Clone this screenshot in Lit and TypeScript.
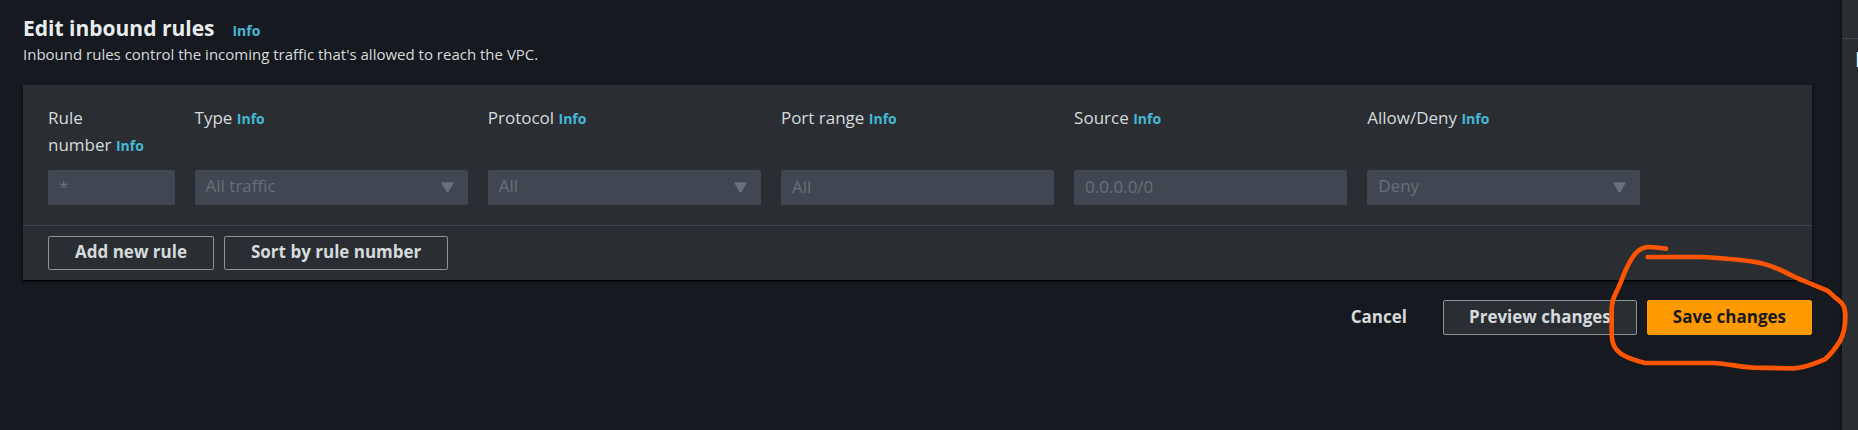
import { LitElement, html, css, nothing } from "lit";
import { customElement } from "lit/decorators.js";

interface Field {
  id: string;
  lead?: string;
  label: string;
  kind: "text" | "select";
  value: string;
}

const FIELDS: Field[] = [
  { id: "rule-number", lead: "Rule", label: "number", kind: "text", value: "*" },
  { id: "type", label: "Type", kind: "select", value: "All traffic" },
  { id: "protocol", label: "Protocol", kind: "select", value: "All" },
  { id: "port-range", label: "Port range", kind: "text", value: "All" },
  { id: "source", label: "Source", kind: "text", value: "0.0.0.0/0" },
  { id: "action", label: "Allow/Deny", kind: "select", value: "Deny" },
];

@customElement("rule-field")
class RuleField extends LitElement {
  static properties = { field: { attribute: false } };
  declare field: Field;

  static styles = css`
    :host {
      display: flex;
      flex-direction: column;
      justify-content: space-between;
      gap: 11px;
      min-width: 0;
    }
    .heading {
      font-size: 17px;
      line-height: 27px;
      color: #d5dbdb;
    }
    .keep {
      white-space: nowrap;
    }
    .info {
      font-size: 14px;
      font-weight: 700;
      color: #44b9d6;
      text-decoration: none;
    }
    .box {
      display: grid;
      align-items: center;
    }
    .control {
      grid-area: 1 / 1;
      box-sizing: border-box;
      width: 100%;
      height: 35px;
      margin: 0;
      padding: 0 11px 3px;
      border: 0;
      border-radius: 2px;
      background: #414750;
      color: #687078;
      font: 400 17px/24px "Open Sans", sans-serif;
      opacity: 1;
      appearance: none;
    }
    .arrow {
      grid-area: 1 / 1;
      justify-self: end;
      width: 13px;
      height: 11px;
      margin-right: 14px;
      pointer-events: none;
    }
  `;

  render() {
    const f = this.field;
    return html`
      <div class="heading">
        <label for=${f.id}>${f.lead ? html`${f.lead}<br />` : nothing}<span class="keep">${f.label}</span></label>
        <a class="info" href="#${f.id}">Info</a>
      </div>
      <div class="box">
        ${f.kind === "select"
          ? html`<select class="control" id=${f.id} disabled>
                <option>${f.value}</option>
              </select>
              <svg class="arrow" viewBox="0 0 13 11" aria-hidden="true">
                <path
                  d="M1 1H12L7 9.4Q6.5 10.2 6 9.4Z"
                  fill="#687078"
                  stroke="#687078"
                  stroke-width="1.4"
                  stroke-linejoin="round"
                />
              </svg>`
          : html`<input class="control" id=${f.id} type="text" .value=${f.value} disabled />`}
      </div>
    `;
  }
}

@customElement("app-root")
class AppRoot extends LitElement {
  static styles = css`
    :host {
      display: flex;
      min-height: 100vh;
      overflow: hidden;
      background: #16191f;
      color: #d5dbdb;
      font-family: "Open Sans", sans-serif;
    }
    main {
      flex: 1;
      min-width: 0;
      padding: 14px 30px 20px 23px;
    }
    .title-row {
      display: flex;
      align-items: baseline;
      gap: 18px;
    }
    h1 {
      margin: 0;
      font-size: 21px;
      line-height: 28px;
      font-weight: 700;
      color: #eaeded;
    }
    .info {
      font-size: 14px;
      font-weight: 700;
      color: #44b9d6;
      text-decoration: none;
    }
    .description {
      margin: 2px 0 21px;
      font-size: 15px;
      line-height: 20px;
    }
    .panel {
      background: #2a2e33;
      box-shadow:
        0 1px 1px 0 rgba(0, 0, 0, 0.8),
        0 1px 3px 0 rgba(0, 0, 0, 0.6);
    }
    .rules {
      display: grid;
      grid-template-columns: repeat(12, minmax(0, 1fr));
      gap: 20px;
      padding: 19px 25px 20px;
    }
    .wide {
      grid-column: span 2;
    }
    .panel-actions {
      display: flex;
      gap: 10px;
      padding: 10px 25px;
      border-top: 1px solid #414750;
    }
    .btn {
      box-sizing: border-box;
      height: 35px;
      padding: 0 25px 2px;
      border: 1px solid #879596;
      border-radius: 2px;
      background: #2a2e33;
      color: #d5dbdb;
      font: 700 17px/24px "Open Sans", sans-serif;
      white-space: nowrap;
    }
    .compact {
      height: 34px;
      padding: 0 26px 2px;
    }
    .link {
      border-color: transparent;
      background: transparent;
    }
    .primary {
      border-color: #ff9900;
      background: #ff9900;
      color: #16191f;
    }
    .form-actions {
      display: flex;
      justify-content: flex-end;
      gap: 10px;
      margin-top: 20px;
    }
    .marked {
      position: relative;
      display: flex;
    }
    .scribble {
      position: absolute;
      top: -70px;
      right: -46px;
      z-index: 1;
      width: 268px;
      height: 160px;
      pointer-events: none;
    }
    aside {
      flex: none;
      width: 16px;
      overflow: hidden;
      background: #2a2e33;
      box-shadow: 0 0 3px 0 rgba(0, 0, 0, 0.8);
    }
    .aside-top {
      height: 38px;
      border-bottom: 1px solid #414750;
    }
    .aside-title {
      margin: 0;
      padding: 6px 0 0 13px;
      font-size: 21px;
      line-height: 28px;
      color: #eaeded;
    }
  `;

  render() {
    return html`
      <main>
        <header>
          <div class="title-row">
            <h1>Edit inbound rules</h1>
            <a class="info" href="#inbound-rules">Info</a>
          </div>
          <p class="description">Inbound rules control the incoming traffic that's allowed to reach the VPC.</p>
        </header>
        <section class="panel">
          <div class="rules">
            ${FIELDS.map(
              (f) => html`<rule-field class=${f.id === "rule-number" ? "narrow" : "wide"} .field=${f}></rule-field>`
            )}
          </div>
          <div class="panel-actions">
            <button class="btn compact" type="button">Add new rule</button>
            <button class="btn compact" type="button">Sort by rule number</button>
          </div>
        </section>
        <div class="form-actions">
          <button class="btn link" type="button">Cancel</button>
          <button class="btn" type="button">Preview changes</button>
          <div class="marked">
            <button class="btn primary" type="button">Save changes</button>
            <svg class="scribble" viewBox="0 0 804 480" aria-hidden="true">
              <path
                d="M228 56C205 54 190 50 172 51C147 54 132 72 116 102C98 136 92 162 78 188C69 206 65 218 65 240L65 310C65 345 77 360 95 373C115 385 140 393 165 399L370 399C410 400 450 411 490 413L610 415C650 413 675 399 705 388C722 374 735 356 749 335C763 310 766 290 766 262C766 235 762 223 745 210C730 199 722 188 710 181L640 152C596 134 560 110 520 101C480 91 420 86 340 81L173 81"
                fill="none"
                stroke="#ff5500"
                stroke-width="14"
                stroke-linecap="round"
                stroke-linejoin="round"
              />
            </svg>
          </div>
        </div>
      </main>
      <aside>
        <div class="aside-top"></div>
        <h2 class="aside-title">I</h2>
      </aside>
    `;
  }
}
